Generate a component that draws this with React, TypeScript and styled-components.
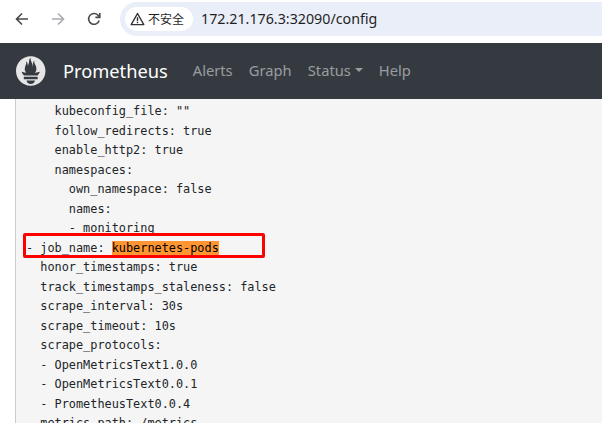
import React from "react";
import styled, { createGlobalStyle } from "styled-components";

const Global = createGlobalStyle`
  html, body { margin: 0; padding: 0; background: #fff; }
  body { width: 602px; height: 423px; overflow: hidden; }
`;

const Page = styled.div`
  position: relative;
  width: 602px;
  height: 423px;
  overflow: hidden;
  display: flex;
  flex-direction: column;
  background: #fff;
`;

const BrowserBar = styled.header`
  height: 43px;
  flex: none;
  display: flex;
  align-items: flex-start;
  padding: 2px 0 0 13px;
  box-sizing: border-box;
  background: #fff;
`;

const ToolButton = styled.button`
  width: 18px;
  height: 34px;
  margin-right: 18px;
  padding: 0;
  border: 0;
  background: none;
  display: flex;
  align-items: center;
  justify-content: center;
  color: ${(p) => (p.disabled ? "#a9abae" : "#474747")};
`;

const Omnibox = styled.div`
  flex: 1;
  margin-left: -1px;
  height: 34px;
  display: flex;
  align-items: center;
  padding-left: 5px;
  background: #e9eef8;
  border-radius: 17px 0 0 17px;
`;

const SecurityChip = styled.div`
  height: 24px;
  width: 68px;
  box-sizing: border-box;
  display: flex;
  align-items: center;
  gap: 3px;
  padding-left: 5px;
  background: #fff;
  border-radius: 12px;
  font: 12px/24px "Noto Sans CJK SC", sans-serif;
  color: #1f1f1f;
`;

const Url = styled.div`
  margin-left: 8px;
  font: 14.25px/20px "Noto Sans", sans-serif;
  color: #1f1f1f;
`;

const Nav = styled.nav`
  height: 56px;
  flex: none;
  display: flex;
  align-items: center;
  padding: 0 0 2px 16px;
  box-sizing: border-box;
  background: #343a40;
  font-family: "Noto Sans", sans-serif;
`;

const Logo = styled.svg`
  width: 30px;
  height: 30px;
  margin: 2px 17px 0 0;
  flex: none;
`;

const Brand = styled.span`
  font-size: 18.25px;
  color: #fff;
  margin-right: 25px;
`;

const NavLink = styled.a<{ $w: number }>`
  width: ${(p) => p.$w}px;
  font-size: 14.7px;
  color: rgba(255, 255, 255, 0.5);
  display: flex;
  align-items: center;
  white-space: nowrap;
`;

const Caret = styled.i`
  display: inline-block;
  margin-left: 4px;
  border-top: 4px solid rgba(255, 255, 255, 0.5);
  border-left: 4px solid transparent;
  border-right: 4px solid transparent;
`;

const Main = styled.main`
  flex: 1;
  min-height: 0;
  padding-left: 15px;
  overflow: hidden;
`;

const Config = styled.pre`
  margin: 0;
  height: 100%;
  box-sizing: border-box;
  padding: 3px 0 0 10px;
  overflow: hidden;
  background: #f5f5f5;
  border-left: 1px solid #ccc;
  color: #212529;
  font: 11.87px/19.5px "DejaVu Sans Mono", monospace;
`;

const Match = styled.mark`
  background: #ff9632;
  color: #000;
`;

const Callout = styled.div`
  position: absolute;
  left: 23px;
  top: 233px;
  width: 242px;
  height: 25px;
  box-sizing: border-box;
  border: 3px solid #f00;
  border-radius: 2px;
`;

const before = `    kubeconfig_file: ""
    follow_redirects: true
    enable_http2: true
    namespaces:
      own_namespace: false
      names:
      - monitoring
- job_name: `;

const after = `
  honor_timestamps: true
  track_timestamps_staleness: false
  scrape_interval: 30s
  scrape_timeout: 10s
  scrape_protocols:
  - OpenMetricsText1.0.0
  - OpenMetricsText0.0.1
  - PrometheusText0.0.4
  metrics_path: /metrics`;

export default function App() {
  return (
    <Page>
      <Global />
      <BrowserBar>
        <ToolButton aria-label="Back">
          <svg width="14" height="14" viewBox="0 0 14 14" fill="none" stroke="currentColor" strokeWidth="1.6">
            <path d="M13 7H2M7 1.5 1.5 7 7 12.5" />
          </svg>
        </ToolButton>
        <ToolButton aria-label="Forward" disabled>
          <svg width="14" height="14" viewBox="0 0 14 14" fill="none" stroke="currentColor" strokeWidth="1.6">
            <path d="M1 7h11M7 1.5 12.5 7 7 12.5" />
          </svg>
        </ToolButton>
        <ToolButton aria-label="Reload">
          <svg width="14" height="14" viewBox="0 0 14 14" fill="none" stroke="currentColor" strokeWidth="1.6">
            <path d="M12.2 8.5A5.4 5.4 0 1 1 11 3.2L12.6 5" />
            <path d="M12.8 1v4.4H8.4" />
          </svg>
        </ToolButton>
        <Omnibox>
          <SecurityChip>
            <svg width="15" height="14" viewBox="0 0 15 14" fill="none" stroke="#333" strokeWidth="1.4">
              <path d="M7.5 1.5 1.2 12.6h12.6z" strokeLinejoin="round" />
              <path d="M7.5 5.2v4M7.5 10v1.2" />
            </svg>
            不安全
          </SecurityChip>
          <Url>172.21.176.3:32090/config</Url>
        </Omnibox>
      </BrowserBar>
      <Nav>
        <Logo viewBox="0 0 115.333 114">
          <path
            fill="#e6e6e6"
            d="M56.667.667C25.372.667 0 26.036 0 57.332c0 31.295 25.372 56.666 56.667 56.666s56.666-25.371 56.666-56.666C113.333 26.036 87.961.667 56.667.667zm0 106.055c-8.904 0-16.123-5.948-16.123-13.283H72.79c0 7.334-7.219 13.283-16.123 13.283zM83.297 89.04H30.034v-9.658h53.264v9.658zm-.191-14.629H30.186c-.176-.203-.356-.403-.526-.609-5.452-6.62-6.736-10.076-7.983-13.598-.021-.116 6.611 1.355 11.314 2.413 0 0 2.42.56 5.958 1.205-3.397-3.982-5.414-9.044-5.414-14.218 0-11.359 8.712-21.285 5.569-29.308 3.059.249 6.331 6.456 6.552 16.161 3.252-4.494 4.613-12.701 4.613-17.733 0-5.21 3.433-11.262 6.867-11.469-3.061 5.045.793 9.37 4.219 20.099 1.285 4.03 1.121 10.812 2.113 15.113.329-8.933 1.865-21.967 7.532-26.467-2.5 5.667.37 12.758 2.333 16.167 3.167 5.5 5.087 9.667 5.087 17.548 0 5.284-1.951 10.259-5.242 14.148 3.742-.702 6.326-1.335 6.326-1.335l12.152-2.371c.001-.001-1.765 7.261-8.55 14.254z"
          />
        </Logo>
        <Brand>Prometheus</Brand>
        <NavLink $w={56}>Alerts</NavLink>
        <NavLink $w={59}>Graph</NavLink>
        <NavLink $w={71}>
          Status
          <Caret />
        </NavLink>
        <NavLink $w={40}>Help</NavLink>
      </Nav>
      <Main>
        <Config>
          {before}
          <Match>kubernetes-pods</Match>
          {after}
        </Config>
      </Main>
      <Callout />
    </Page>
  );
}
